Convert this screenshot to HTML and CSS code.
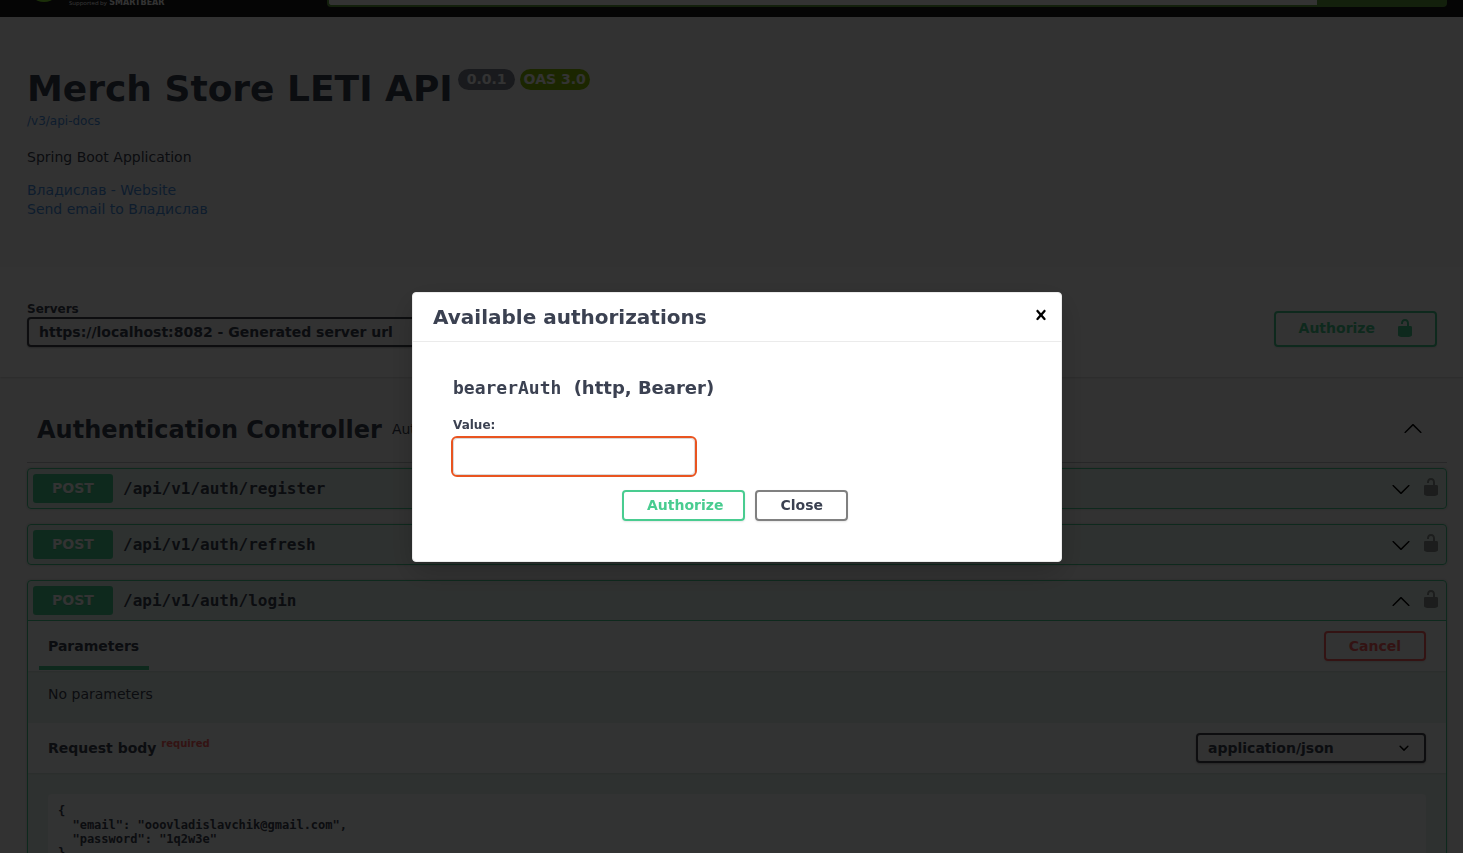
FILE: index.html
```html
<!DOCTYPE html>
<html lang="en">
<head>
<meta charset="utf-8">
<title>Swagger UI</title>
<link rel="stylesheet" href="styles.css">
</head>
<body>
<svg class="defs" aria-hidden="true">
  <symbol id="unlocked" viewBox="0 0 20 20"><path d="M15.8 8H14V5.6C14 2.703 12.665 1 10 1 7.334 1 6 2.703 6 5.6V6h2v-.801C8 3.754 8.797 3 10 3c1.203 0 2 .754 2 2.199V8H4c-.553 0-1 .646-1 1.199V17c0 .549.428 1.139.951 1.307l1.197.387C5.672 18.861 6.55 19 7.1 19h5.8c.549 0 1.428-.139 1.951-.307l1.196-.387c.524-.167.953-.757.953-1.306V9.199C17 8.646 16.352 8 15.8 8z"/></symbol>
  <symbol id="arrow-down" viewBox="0 0 20 20"><path d="M17.418 6.109c.272-.268.709-.268.979 0s.271.701 0 .969l-7.908 7.83c-.27.268-.707.268-.979 0l-7.908-7.83c-.27-.268-.27-.701 0-.969.271-.268.709-.268.979 0L10 13.25z"/></symbol>
  <symbol id="arrow-up" viewBox="0 0 20 20"><path d="M17.418 14.908c.272.268.709.268.979 0s.271-.701 0-.969l-7.908-7.83c-.27-.268-.707-.268-.979 0l-7.908 7.83c-.27.268-.27.701 0 .969.271.268.709.268.979 0L10 7.767z"/></symbol>
  <symbol id="close" viewBox="0 0 20 20"><path d="M14.348 14.849c-.469.469-1.229.469-1.697 0L10 11.819l-2.651 3.029c-.469.469-1.229.469-1.697 0-.469-.469-.469-1.229 0-1.697l2.758-3.15-2.759-3.152c-.469-.469-.469-1.228 0-1.697.469-.469 1.228-.469 1.697 0L10 8.183l2.651-3.031c.469-.469 1.228-.469 1.697 0 .469.469.469 1.229 0 1.697l-2.758 3.152 2.758 3.15c.469.469.469 1.229 0 1.698z"/></symbol>
</svg>

<header class="topbar">
  <a class="logo" href="#">
    <svg class="logo-mark" viewBox="0 0 34 34" aria-hidden="true"><circle cx="17" cy="17" r="17" fill="#85ea2d"/></svg>
    <span class="logo-text">Supported by <b>SMARTBEAR</b></span>
  </a>
  <form class="explore">
    <input type="text" aria-label="API definition">
    <button type="button" aria-label="Explore"></button>
  </form>
</header>

<main>
  <section class="info">
    <div class="title-row">
      <h1>Merch Store LETI API</h1>
      <span class="badge">0.0.1</span>
      <span class="badge badge-oas">OAS 3.0</span>
    </div>
    <a class="docs-link" href="#">/v3/api-docs</a>
    <p>Spring Boot Application</p>
    <div class="contact">
      <a href="#">Владислав - Website</a>
      <a href="#">Send email to Владислав</a>
    </div>
  </section>

  <section class="scheme">
    <div class="servers">
      <label for="server">Servers</label>
      <select class="server" id="server"><option>https://localhost:8082 - Generated server url</option></select>
    </div>
    <button class="btn btn-green btn-lock" type="button">Authorize <svg class="icon"><use href="#unlocked"/></svg></button>
  </section>

  <section class="operations">
    <div class="tag">
      <h2>Authentication Controller</h2>
      <small>Authentication API</small>
      <button class="icon-btn" type="button" aria-label="Collapse section"><svg class="icon"><use href="#arrow-up"/></svg></button>
    </div>

    <article class="op">
      <div class="op-head">
        <span class="method">POST</span><span class="path">/api/v1/auth/register</span>
        <button class="icon-btn" type="button" aria-label="Expand operation"><svg class="icon"><use href="#arrow-down"/></svg></button>
        <button class="icon-btn lock" type="button" aria-label="Authorization"><svg class="icon"><use href="#unlocked"/></svg></button>
      </div>
    </article>

    <article class="op">
      <div class="op-head">
        <span class="method">POST</span><span class="path">/api/v1/auth/refresh</span>
        <button class="icon-btn" type="button" aria-label="Expand operation"><svg class="icon"><use href="#arrow-down"/></svg></button>
        <button class="icon-btn lock" type="button" aria-label="Authorization"><svg class="icon"><use href="#unlocked"/></svg></button>
      </div>
    </article>

    <article class="op op-open">
      <div class="op-head">
        <span class="method">POST</span><span class="path">/api/v1/auth/login</span>
        <button class="icon-btn" type="button" aria-label="Collapse operation"><svg class="icon"><use href="#arrow-up"/></svg></button>
        <button class="icon-btn lock" type="button" aria-label="Authorization"><svg class="icon"><use href="#unlocked"/></svg></button>
      </div>
      <div class="bar">
        <h3 class="tab">Parameters</h3>
        <button class="btn btn-red" type="button">Cancel</button>
      </div>
      <p class="empty">No parameters</p>
      <div class="bar">
        <h3>Request body <sup>required</sup></h3>
        <select class="media" aria-label="Request content type"><option>application/json</option></select>
      </div>
      <div class="body-box">
<pre class="code">{
  "email": "ooovladislavchik@gmail.com",
  "password": "1q2w3e"
}</pre>
      </div>
    </article>
  </section>
</main>

<div class="overlay">
  <div class="modal" role="dialog" aria-modal="true" aria-labelledby="dialog-title">
    <div class="modal-head">
      <h3 id="dialog-title">Available authorizations</h3>
      <button class="icon-btn" type="button" aria-label="Close dialog"><svg class="icon"><use href="#close"/></svg></button>
    </div>
    <form class="modal-body">
      <h4><code>bearerAuth</code> (http, Bearer)</h4>
      <label for="token">Value:</label>
      <input class="token" id="token" type="text">
      <div class="actions">
        <button class="btn btn-green" type="button">Authorize</button>
        <button class="btn" type="button">Close</button>
      </div>
    </form>
  </div>
</div>
</body>
</html>
```

FILE: styles.css
```css
* { box-sizing: border-box; }

body {
  margin: 0;
  height: 100vh;
  overflow: hidden;
  background: #fafafa;
  color: #3b4151;
  font: 14px/18px "DejaVu Sans", sans-serif;
}

h1, h2, h3, h4, p, pre { margin: 0; }
a { color: #4990e2; text-decoration: none; }
button, select, input { font-family: inherit; color: inherit; }
.defs { display: none; }
.icon { display: block; width: 20px; height: 20px; fill: currentColor; }

.icon-btn {
  padding: 0;
  border: 0;
  background: none;
  color: #000;
}

.btn {
  padding: 4px 23px;
  border: 2px solid gray;
  border-radius: 4px;
  background: transparent;
  box-shadow: 0 1px 2px rgba(0, 0, 0, .1);
  font-size: 14px;
  font-weight: 700;
  line-height: 18px;
}
.btn-green { padding-right: 20px; border-color: #49cc90; color: #49cc90; }
.btn-red { border-color: #ff6060; color: #ff6060; }

select {
  height: 30px;
  padding: 0 40px 0 10px;
  appearance: none;
  border: 2px solid #41444e;
  border-radius: 4px;
  background: #f7f7f7 url("data:image/svg+xml,%3Csvg xmlns='http://www.w3.org/2000/svg' viewBox='0 0 20 20'%3E%3Cpath d='M13.418 7.859a.695.695 0 0 1 .978 0 .68.68 0 0 1 0 .969l-3.908 3.83a.697.697 0 0 1-.979 0l-3.908-3.83a.68.68 0 0 1 0-.969.695.695 0 0 1 .978 0L10 11z'/%3E%3C/svg%3E") right 10px center / 20px no-repeat;
  box-shadow: 0 1px 2px rgba(0, 0, 0, .25);
  font-size: 14px;
  font-weight: 700;
}

/* Header */
.topbar {
  display: flex;
  align-items: flex-end;
  height: 17px;
  padding: 0 16px 10px 27px;
  overflow: hidden;
  background: #1b1b1b;
}
.logo {
  display: flex;
  align-items: flex-end;
  gap: 8px;
  width: 300px;
  color: #fff;
}
.logo-mark { width: 34px; height: 34px; margin-bottom: 5px; }
.logo-text { font: 6px/8px "Open Sans", sans-serif; }
.logo-text b { margin-left: 1px; font: 700 8px/8px "DejaVu Sans", sans-serif; }
.explore {
  display: flex;
  flex: 1;
  height: 34px;
}
.explore input {
  flex: 1;
  border: 2px solid #62a03f;
  border-right: 0;
  border-radius: 4px 0 0 4px;
  background: #fff;
}
.explore button {
  width: 130px;
  border: 0;
  border-radius: 0 4px 4px 0;
  background: #62a03f;
}

/* API description */
.info { padding: 50px 16px 48px 27px; }
.title-row {
  display: flex;
  align-items: flex-start;
  gap: 5px;
}
h1 { font-size: 36px; line-height: 44px; }
.badge {
  margin-top: 2px;
  padding: 1px 8px 2px 9px;
  border-radius: 20px;
  background: #7d8492;
  color: #fff;
  font-weight: 700;
}
.badge-oas { padding: 1px 4px 2px; background: #89bf04; }
.docs-link { display: block; font-size: 12px; line-height: 20px; }
.info p { padding: 17px 0 15px; }
.contact {
  display: flex;
  flex-direction: column;
  align-items: flex-start;
  line-height: 19px;
}

/* Server picker */
.scheme {
  display: flex;
  justify-content: space-between;
  align-items: flex-end;
  padding: 34px 26px 30px 27px;
  background: #fff;
  box-shadow: 0 1px 2px rgba(0, 0, 0, .15);
}
.servers { display: flex; flex-direction: column; }
.servers label { font-size: 12px; font-weight: 700; line-height: 16px; }
.server { min-width: 420px; }
.btn-lock {
  display: flex;
  align-items: center;
  gap: 20px;
  padding-top: 5px;
  padding-bottom: 7px;
}

/* Operations */
.operations { padding: 30px 16px 0 27px; }
.tag {
  display: flex;
  align-items: center;
  gap: 10px;
  margin-bottom: 5px;
  padding: 3px 24px 16px 10px;
  border-bottom: 1px solid rgba(59, 65, 81, .3);
}
h2 { padding-top: 4px; font-size: 24px; line-height: 32px; }
small { flex: 1; padding-top: 2px; font-size: 14px; }

.op {
  margin-bottom: 15px;
  border: 1px solid #49cc90;
  border-radius: 4px;
  background: rgba(73, 204, 144, .1);
  box-shadow: 0 0 3px rgba(0, 0, 0, .19);
}
.op-head {
  display: flex;
  align-items: center;
  gap: 10px;
  padding: 5px;
}
.op-open .op-head { border-bottom: 1px solid #49cc90; }
.method {
  width: 80px;
  padding: 5px 0 6px;
  border-radius: 3px;
  background: #49cc90;
  color: #fff;
  font-weight: 700;
  text-align: center;
  text-shadow: 0 1px 0 rgba(0, 0, 0, .1);
}
.path {
  flex: 1;
  font: 700 16px/20px "DejaVu Sans Mono", monospace;
}
.lock { padding-bottom: 4px; color: rgba(0, 0, 0, .4); }

.bar {
  display: flex;
  justify-content: space-between;
  align-items: center;
  height: 50px;
  padding: 0 20px;
  background: rgba(255, 255, 255, .8);
  box-shadow: 0 1px 2px rgba(0, 0, 0, .1);
}
.bar h3 { font-size: 14px; line-height: 18px; }
.bar sup {
  color: #ff6060;
  font-size: 10px;
  line-height: 0;
}
.bar .tab {
  align-self: flex-end;
  margin: 0 -9px 1px;
  padding: 0 10px 11px 9px;
  border-bottom: 4px solid #49cc90;
}
.media { width: 230px; }
.empty { padding: 14px 20px 20px; }
.body-box { padding: 21px 20px; }
.code {
  padding: 10px;
  border-radius: 4px;
  background: rgba(255, 255, 255, .8);
  font: 700 12px/14px "DejaVu Sans Mono", monospace;
}

/* Authorization dialog */
.overlay {
  position: fixed;
  inset: 0;
  display: flex;
  align-items: center;
  justify-content: center;
  padding-left: 11px;
  background: rgba(0, 0, 0, .8);
}
.modal {
  width: 650px;
  max-width: 100%;
  border: 1px solid #ebebeb;
  border-radius: 4px;
  background: #fff;
  box-shadow: 0 10px 30px rgba(0, 0, 0, .2);
}
.modal-head {
  display: flex;
  align-items: flex-start;
  justify-content: space-between;
  padding: 12px 10px 12px 20px;
  border-bottom: 1px solid #ebebeb;
}
.modal-head h3 { font-size: 20px; line-height: 24px; }
.modal-body { padding: 35px 40px 40px; }
h4 { margin-bottom: 18px; font-size: 18px; line-height: 22px; }
h4 code { margin-right: 6px; font-family: "DejaVu Sans Mono", monospace; }
.modal-body label {
  display: block;
  margin-bottom: 5px;
  font-size: 12px;
  font-weight: 700;
  line-height: 16px;
}
.token {
  display: block;
  width: 242px;
  height: 37px;
  padding: 8px 10px;
  border: 1px solid #d9d9d9;
  border-radius: 4px;
  outline: 2px solid #e95420;
  background: #fff;
}
.actions {
  display: flex;
  justify-content: center;
  gap: 10px;
  padding-top: 15px;
  padding-right: 4px;
}
.actions .btn { padding-bottom: 5px; }
```
